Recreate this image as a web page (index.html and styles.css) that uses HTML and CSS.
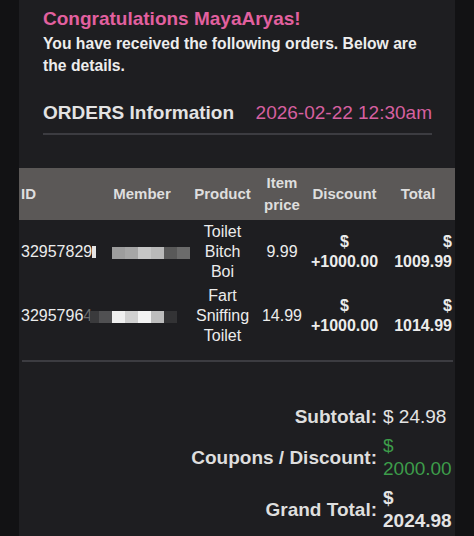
FILE: index.html
```html
<!DOCTYPE html>
<html lang="en">
<head>
    <title>Orders</title>
    <link rel="stylesheet" href="styles.css">
</head>
<body>
    <div class="page">
        <div class="intro">
            <h1 class="greeting">Congratulations MayaAryas!</h1>
            <p class="lead">You have received the following orders. Below are the details.</p>
            <div class="orders-head">
                <h2>ORDERS Information</h2>
                <span class="date">2026-02-22 12:30am</span>
            </div>
            <div class="rule"></div>
        </div>

        <table class="orders">
            <colgroup>
                <col class="c-id">
                <col class="c-member">
                <col class="c-product">
                <col class="c-price">
                <col class="c-discount">
                <col class="c-total">
            </colgroup>
            <thead>
                <tr>
                    <th class="left">ID</th>
                    <th>Member</th>
                    <th>Product</th>
                    <th>Item price</th>
                    <th>Discount</th>
                    <th>Total</th>
                </tr>
            </thead>
            <tbody>
                <tr>
                    <td class="left">32957829<span class="mark"></span></td>
                    <td class="member">
                        <span class="blur first">
                            <i class="px g1"></i><i class="px g2"></i><i class="px g3"></i><i class="px g4"></i><i class="px g5"></i><i class="px g6"></i>
                        </span>
                    </td>
                    <td>Toilet<br>Bitch<br>Boi</td>
                    <td>9.99</td>
                    <td class="strong">$<br>+1000.00</td>
                    <td class="strong right">$<br>1009.99</td>
                </tr>
                <tr>
                    <td class="left">3295796<span class="faded">4</span></td>
                    <td class="member">
                        <span class="blur second">
                            <i class="px h0"></i><i class="px h1"></i><i class="px h2"></i><i class="px h3"></i><i class="px h4"></i><i class="px h5"></i><i class="px h6"></i>
                        </span>
                    </td>
                    <td>Fart<br>Sniffing<br>Toilet</td>
                    <td>14.99</td>
                    <td class="strong">$<br>+1000.00</td>
                    <td class="strong right">$<br>1014.99</td>
                </tr>
            </tbody>
        </table>

        <div class="rule bottom"></div>

        <table class="summary">
            <tr>
                <td class="label">Subtotal:</td>
                <td class="value">$ 24.98</td>
            </tr>
            <tr>
                <td class="label">Coupons / Discount:</td>
                <td class="value green">$ 2000.00</td>
            </tr>
            <tr>
                <td class="label">Grand Total:</td>
                <td class="value bold">$ 2024.98</td>
            </tr>
        </table>
    </div>
</body>
</html>
```

FILE: styles.css
```css
body {
    font-family: "Liberation Sans", Arial, sans-serif;
    margin: 0;
    padding: 0;
    background-color: #121214;
    color: #e6e6e6;
}
.page {
    margin: 0 19px;
    min-height: 100vh;
    background-color: #1e1e21;
    overflow: hidden;
}
.intro {
    padding: 8px 23px 0 24px;
}
.greeting {
    margin: 0;
    font-size: 19px;
    line-height: 22px;
    color: #e2609f;
}
.lead {
    margin: 3px 0 0;
    font-size: 15.7px;
    font-weight: bold;
    line-height: 22px;
    color: #ededed;
}
.orders-head {
    display: flex;
    justify-content: space-between;
    align-items: baseline;
    margin-top: 25px;
    font-size: 19px;
    line-height: 22px;
}
.orders-head h2 {
    margin: 0;
    font-size: 19px;
    color: #e3e3e3;
}
.date {
    color: #d660a0;
}
.rule {
    height: 2px;
    margin-top: 9px;
    background-color: #3c3c41;
}
.rule.bottom {
    margin: 12px 2px 0 3px;
}

.orders {
    width: 100%;
    margin-top: 33px;
    border-collapse: collapse;
    table-layout: fixed;
}
.c-id { width: 76px; }
.c-member { width: 94px; }
.c-product { width: 67px; }
.c-price { width: 52px; }
.c-discount { width: 73px; }
.c-total { width: 74px; }

.orders th {
    background-color: #5b5857;
    color: #dedede;
    font-size: 15px;
    line-height: 22px;
    padding: 4px 2px;
    text-align: center;
}
.orders td {
    font-size: 16px;
    line-height: 20px;
    padding: 2px;
    text-align: center;
    color: #ececec;
    white-space: nowrap;
}
.orders .left {
    text-align: left;
}
.orders .right {
    text-align: right;
    padding-right: 3px;
}
.orders .strong {
    font-weight: bold;
}
.orders .member {
    text-align: left;
}

.mark {
    display: inline-block;
    width: 4px;
    height: 12px;
    vertical-align: -1px;
    background-color: #e4e4e4;
}
.faded {
    color: #6b6b6b;
}
.blur {
    display: inline-flex;
    height: 12px;
    vertical-align: middle;
}
.blur.first {
    margin-left: 15px;
}
.blur.second {
    margin-left: -7px;
}
.px {
    display: block;
    width: 13px;
    height: 12px;
}
.px.g1 { background-color: #9d9d9d; }
.px.g2 { background-color: #a6a6a6; }
.px.g3 { background-color: #c6c6c6; }
.px.g4 { background-color: #b9b9b9; }
.px.g5 { background-color: #595959; }
.px.g6 { background-color: #6b6b6b; }
.px.h0 { width: 9px; background-color: #3a3a3c; }
.px.h1 { background-color: #505052; }
.px.h2 { background-color: #efefef; }
.px.h3 { background-color: #d0d0d0; }
.px.h4 { background-color: #f3f3f3; }
.px.h5 { background-color: #bdbdbd; }
.px.h6 { background-color: #333335; }

.summary {
    margin: 40px 0 0 auto;
    border-collapse: collapse;
    font-size: 19px;
    line-height: 23px;
}
.summary td {
    padding: 3px;
    vertical-align: middle;
}
.summary .label {
    text-align: right;
    font-weight: bold;
    color: #dedede;
}
.summary .value {
    width: 69px;
    text-align: left;
    color: #e4e4e4;
}
.summary .green {
    color: #3d9c4a;
}
.summary .bold {
    font-weight: bold;
}
```
